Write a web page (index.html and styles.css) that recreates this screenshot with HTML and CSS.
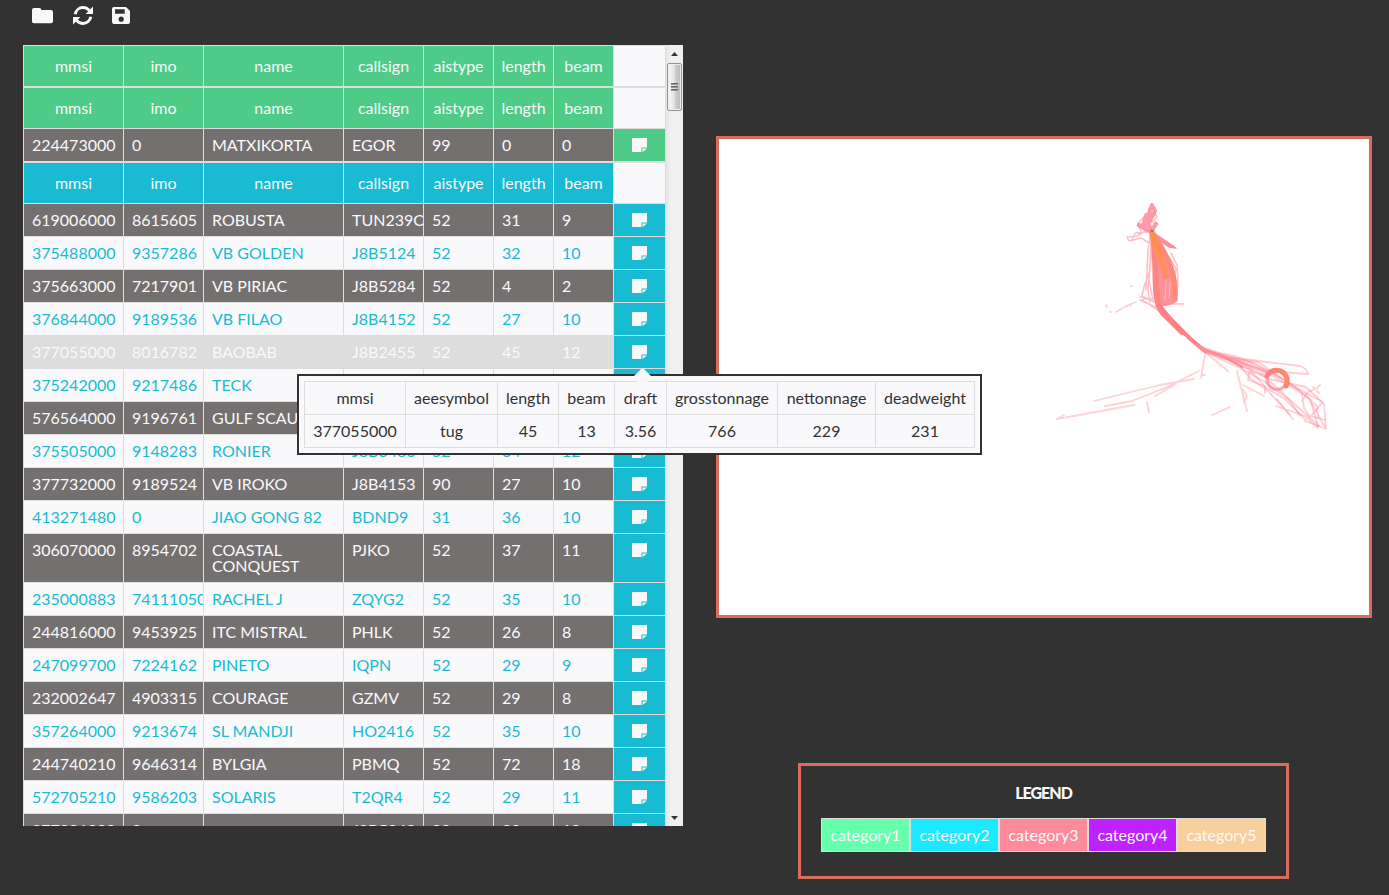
FILE: index.html
```html
<!DOCTYPE html>
<html lang="en">
<head>
<meta charset="utf-8">
<title>Vessels</title>
<link rel="stylesheet" href="styles.css">
</head>
<body>
<svg class="defs" aria-hidden="true">
  <symbol id="note" viewBox="0 0 16 15"><path d="M0 0H15V9.5H9.5V14H0Z" fill="#f9f9fc"/><path d="M10.500 14V10.500H15Z" fill="#f9f9fc"/></symbol>
</svg>
<main class="page">
  <section class="left">
    <nav class="toolbar">
      <svg class="tool folder" viewBox="0 0 21 16"><path d="M0 2Q0 0 2 0H7.5Q9.3 0 9.3 2H19Q21 2 21 4V13.5Q21 15.3 19 15.3H2Q0 15.3 0 13.5Z" fill="#f9f9fc"/></svg>
      <svg class="tool refresh" viewBox="0 0 20 19"><path d="M2.2 8.2C3 4 6.4 1.6 10 1.6C12.6 1.6 14.7 2.7 16.4 4.5M17.8 10.8C17 15 13.6 17.4 10 17.4C7.400 17.400 5.300 16.300 3.600 14.500" fill="none" stroke="#f9f9fc" stroke-width="3"/><path d="M20 .6V8H12.600ZM0 18.400V11H7.400Z" fill="#f9f9fc"/></svg>
      <svg class="tool save" viewBox="0 0 18 17"><path fill-rule="evenodd" d="M2 0H14L18 4V15Q18 17 16 17H2Q0 17 0 15V2Q0 0 2 0ZM3 2.200V6.800H12.700V2.200ZM9.200 9.600A2.600 2.600 0 1 0 9.200 14.800A2.600 2.600 0 1 0 9.200 9.600Z" fill="#f9f9fc"/></svg>
    </nav>
    <div class="panel">
      <div class="tables">
        <div class="grid green">
          <div class="row head"><b>mmsi</b><b>imo</b><b>name</b><b>callsign</b><b>aistype</b><b>length</b><b>beam</b><b></b></div>
        </div>
        <div class="grid green">
          <div class="row head"><b>mmsi</b><b>imo</b><b>name</b><b>callsign</b><b>aistype</b><b>length</b><b>beam</b><b></b></div>
          <div class="row dark"><span>224473000</span><span>0</span><span>MATXIKORTA</span><span>EGOR</span><span>99</span><span>0</span><span>0</span><i><svg><use href="#note"/></svg></i></div>
        </div>
        <div class="grid cyan">
          <div class="row head"><b>mmsi</b><b>imo</b><b>name</b><b>callsign</b><b>aistype</b><b>length</b><b>beam</b><b></b></div>
          <div class="row dark"><span>619006000</span><span>8615605</span><span>ROBUSTA</span><span>TUN239O</span><span>52</span><span>31</span><span>9</span><i><svg><use href="#note"/></svg></i></div>
          <div class="row"><span>375488000</span><span>9357286</span><span>VB GOLDEN</span><span>J8B5124</span><span>52</span><span>32</span><span>10</span><i><svg><use href="#note"/></svg></i></div>
          <div class="row dark"><span>375663000</span><span>7217901</span><span>VB PIRIAC</span><span>J8B5284</span><span>52</span><span>4</span><span>2</span><i><svg><use href="#note"/></svg></i></div>
          <div class="row"><span>376844000</span><span>9189536</span><span>VB FILAO</span><span>J8B4152</span><span>52</span><span>27</span><span>10</span><i><svg><use href="#note"/></svg></i></div>
          <div class="row hover"><span>377055000</span><span>8016782</span><span>BAOBAB</span><span>J8B2455</span><span>52</span><span>45</span><span>12</span><i><svg><use href="#note"/></svg></i></div>
          <div class="row"><span>375242000</span><span>9217486</span><span>TECK</span><span></span><span></span><span></span><span></span><i><svg><use href="#note"/></svg></i></div>
          <div class="row dark"><span>576564000</span><span>9196761</span><span>GULF SCAU</span><span></span><span></span><span></span><span></span><i><svg><use href="#note"/></svg></i></div>
          <div class="row"><span>375505000</span><span>9148283</span><span>RONIER</span><span>J8B3480</span><span>52</span><span>34</span><span>12</span><i><svg><use href="#note"/></svg></i></div>
          <div class="row dark"><span>377732000</span><span>9189524</span><span>VB IROKO</span><span>J8B4153</span><span>90</span><span>27</span><span>10</span><i><svg><use href="#note"/></svg></i></div>
          <div class="row"><span>413271480</span><span>0</span><span>JIAO GONG 82</span><span>BDND9</span><span>31</span><span>36</span><span>10</span><i><svg><use href="#note"/></svg></i></div>
          <div class="row dark"><span>306070000</span><span>8954702</span><span>COASTAL CONQUEST</span><span>PJKO</span><span>52</span><span>37</span><span>11</span><i><svg><use href="#note"/></svg></i></div>
          <div class="row"><span>235000883</span><span>741110500</span><span>RACHEL J</span><span>ZQYG2</span><span>52</span><span>35</span><span>10</span><i><svg><use href="#note"/></svg></i></div>
          <div class="row dark"><span>244816000</span><span>9453925</span><span>ITC MISTRAL</span><span>PHLK</span><span>52</span><span>26</span><span>8</span><i><svg><use href="#note"/></svg></i></div>
          <div class="row"><span>247099700</span><span>7224162</span><span>PINETO</span><span>IQPN</span><span>52</span><span>29</span><span>9</span><i><svg><use href="#note"/></svg></i></div>
          <div class="row dark"><span>232002647</span><span>4903315</span><span>COURAGE</span><span>GZMV</span><span>52</span><span>29</span><span>8</span><i><svg><use href="#note"/></svg></i></div>
          <div class="row"><span>357264000</span><span>9213674</span><span>SL MANDJI</span><span>HO2416</span><span>52</span><span>35</span><span>10</span><i><svg><use href="#note"/></svg></i></div>
          <div class="row dark"><span>244740210</span><span>9646314</span><span>BYLGIA</span><span>PBMQ</span><span>52</span><span>72</span><span>18</span><i><svg><use href="#note"/></svg></i></div>
          <div class="row"><span>572705210</span><span>9586203</span><span>SOLARIS</span><span>T2QR4</span><span>52</span><span>29</span><span>11</span><i><svg><use href="#note"/></svg></i></div>
          <div class="row dark"><span>377291000</span><span>0</span><span></span><span>J8B5242</span><span>90</span><span>30</span><span>10</span><i><svg><use href="#note"/></svg></i></div>
        </div>
      </div>
      <div class="scrollbar">
        <svg class="arrow" viewBox="0 0 17 18"><path d="M5 11H12L8.500 7Z" fill="#333"/></svg>
        <div class="thumb"><u></u><u></u><u></u></div>
        <svg class="arrow down" viewBox="0 0 17 18"><path d="M5 8H12L8.500 12Z" fill="#333"/></svg>
      </div>
    </div>
    <div class="tooltip">
      <table class="details">
        <colgroup><col class="w101"><col class="w92"><col class="w61"><col class="w56"><col class="w52"><col class="w111"><col class="w98"><col class="w99"></colgroup>
        <tr><td>mmsi</td><td>aeesymbol</td><td>length</td><td>beam</td><td>draft</td><td>grosstonnage</td><td>nettonnage</td><td>deadweight</td></tr>
        <tr><td>377055000</td><td>tug</td><td>45</td><td>13</td><td>3.56</td><td>766</td><td>229</td><td>231</td></tr>
      </table>
      <svg class="tip" viewBox="0 0 20 18"><path d="M0 9L8 1.200Q10 -.4 12 1.200L20 9L11 18H9Z" fill="#f9f9fc"/></svg>
    </div>
  </section>
  <section class="right">
    <div class="map">
      <svg viewBox="719 139 650 476" fill="none" stroke="#ff8a99" stroke-linecap="round" stroke-linejoin="round">
        <!-- northern traces -->
        <g stroke-width="3" opacity=".85">
          <path d="M1152 205L1147 218L1144 228M1153 207L1155 211L1150 221M1146 215L1143 226L1151 230M1150 209L1148 222" stroke-width="4"/>
          <path d="M1139 225L1146 229L1151 231L1156 224M1151 214L1147 226L1140 226M1148 222L1150 229" stroke-width="4.500"/>
        </g>
        <g stroke-width="1.500" opacity=".55">
          <path d="M1143 218L1138 223L1141 231M1154 212L1157 217L1152 223M1147 230L1137 236L1127 237L1129 241L1141 238L1149 243M1149 232L1135 233L1132 240"/>
          <path d="M1150 236L1148 250L1147 270L1146 290M1151 240L1150 265L1148 290L1150 302M1153 242L1150 270L1145 285M1151 250L1149 280L1153 301"/>
          <path d="M1145 283L1142 296L1154 302M1140 297L1160 300L1172 304L1184 304M1140 300L1160 309M1146 302L1164 315M1142 300L1148 298"/>
          <path d="M1171 253L1177 265L1178 278L1177 294M1169 257L1176 269L1174 280L1178 288"/>
        </g>
        <path d="M1151 231L1176 248L1169 247L1159 240Z" fill="#ff8a99" stroke-width="1.500"/>
        <path d="M1151 231C1156 255 1152 292 1158 304C1162 308 1173 304 1177 301C1179 275 1171 256 1151 231Z" fill="#ff909b" stroke-width="1"/>
        <path d="M1166 280L1165 300M1170 282L1169 298" stroke="#ffb1ba" stroke-width="1.200"/>
        <path d="M1152 232C1157 250 1154 278 1157 299Q1159 311 1168 318L1182 332" stroke="#ff8680" stroke-width="6"/>
        <path d="M1153 234C1171 260 1176 277 1174 298" stroke="#ff8a78" stroke-width="5"/>
        <path d="M1153 236C1156 250 1162 260 1166 276" stroke="#ff8e62" stroke-width="6"/>
        <path d="M1152 232C1154 241 1158 247 1161 256" stroke="#ff913f" stroke-width="3"/>
        <circle cx="1152" cy="231" r="1.200" fill="#539875" stroke="none"/>
        <path d="M1159 305Q1179 331 1205 351" stroke="#ff808b" stroke-width="4"/>
        <!-- south-western traces -->
        <g stroke-width="1.800" opacity=".38">
          <path d="M1116 312L1126 306L1136 302M1126 306L1131 305M1106 305L1107 307M1110 312H1111M1131 286H1132"/>
          <path d="M1094 401L1160 385L1194 379M1105 406L1132 401L1165 388L1199 371M1155 396L1176 384M1057 419L1134 405M1057 419L1064 415M1147 402L1149 412M1205 355L1201 378M1203 375H1205M1212 415L1230 407"/>
          <path d="M1205 352L1228 371M1237 371L1247 411M1240 386L1247 396L1244 403M1242 389L1244 402M1243 385L1264 396"/>
        </g>
        <!-- south-eastern bundle -->
        <path d="M1199 347Q1213 353 1224 357L1242 367" stroke-width="2.500"/>
        <g stroke-width="1.800">
          <path opacity=".42" d="M1195 344L1230 357L1267 362L1300 366Q1308 369 1308 374L1293 373L1271 370"/>
          <path opacity=".42" d="M1201 350L1235 356L1267 370L1291 385L1321 401M1203 351L1242 369L1263 381L1291 401L1319 426"/>
          <path opacity=".42" d="M1204 351L1254 363L1288 382L1310 399L1318 426M1208 352L1238 361L1265 377L1288 398L1300 416"/>
          <path opacity=".42" d="M1220 357L1249 369L1266 388L1285 399L1306 420M1240 366L1251 379L1268 391L1289 414"/>
          <path opacity=".42" d="M1211 353L1236 359L1258 362L1294 386L1317 406L1318 418M1224 357L1261 369L1308 397L1325 427"/>
          <path opacity=".42" d="M1230 360L1269 379L1306 387L1324 404L1326 429L1305 421M1250 368L1248 380L1264 386M1265 386V393M1264 374L1249 372"/>
          <path opacity=".42" d="M1302 401L1308 392L1317 388L1320 385M1313 387L1319 393M1277 399L1293 419M1276 406L1305 416L1318 428M1302 393L1304 408L1310 417M1322 403L1311 416L1325 420"/>
        </g>
        <path d="M1205 352L1237 361L1269 373" stroke-width="3" opacity=".6"/>
        <circle cx="1277" cy="379.500" r="10" stroke-width="3" opacity=".75"/>
        <path d="M1267 376A10.500 10.500 0 1 1 1286 386" stroke="#ff7e82" stroke-width="5"/>
        <path d="M1274 371Q1289 369 1287 384" stroke="#ff8c55" stroke-width="2.500"/>
      </svg>
    </div>
    <div class="legend">
      <h2 class="legend-title">LEGEND</h2>
      <div class="categories"><span class="cat c1">category1</span><span class="cat c2">category2</span><span class="cat c3">category3</span><span class="cat c4">category4</span><span class="cat c5">category5</span></div>
    </div>
  </section>
</main>
</body>
</html>
```
FILE: styles.css
```css
* { box-sizing: border-box; }
body { margin: 0; background: #323232; color: #f9f9fc; font: 16px/16px Lato, sans-serif; }
.defs { display: none; }
.page { display: flex; height: 895px; overflow: hidden; padding-left: 23px; }
.left { position: relative; width: 660px; }
.toolbar { display: flex; align-items: center; height: 45px; padding: 0 0 14px 9px; }
.tool { display: block; }
.folder { width: 21px; height: 16px; margin-right: 20px; }
.refresh { width: 20px; height: 19px; margin-right: 19px; }
.save { width: 18px; height: 17px; }
.panel { display: flex; height: 781px; background: #f9f9fc; overflow: hidden; }
.tables { width: 643px; flex: none; }
.grid { border: solid #ddd; border-width: 0 1px 1px 0; }
.row { display: grid; grid-template-columns: 100px 80px 140px 80px 70px 60px 60px 52px; color: #18bbd1; }
.row > * { border: solid #ddd; border-width: 1px 0 0 1px; padding: 8px; overflow: hidden; }
.row b { height: 41px; padding: 12px 0; text-align: center; font-weight: 400; color: #f9f9fc; }
.row i { display: flex; justify-content: center; padding: 9px 0 0; }
.row i svg { width: 16px; height: 15px; }
.green b, .green i { background: #4ecc87; }
.cyan b, .cyan i { background: #18bbd1; }
.row b:last-child { background: #f9f9fc; }
.dark span { background: #757070; color: #f9f9fc; }
.hover span { background: #ddd; color: #f9f9fc; }
.scrollbar { display: flex; flex-direction: column; width: 17px; background: linear-gradient(90deg, #e6e6e6, #f1f1f1 30%, #eee); }
.arrow { display: block; width: 17px; height: 18px; }
.arrow.down { margin-top: auto; }
.thumb { display: flex; flex-direction: column; align-items: center; justify-content: center; gap: 1px; width: 15px; height: 48px; margin-left: 1px; border: 1px solid #929292; border-radius: 2px; background: linear-gradient(90deg, #f5f5f5, #e6e6e6 45%, #cbcbcd 60%, #bfbfc3 90%, #ddd); box-shadow: inset 0 0 0 1px #eee; }
.thumb u { width: 7px; height: 2px; background: linear-gradient(#555, #aaa); }
.tooltip { position: absolute; left: 274px; top: 374px; width: 685px; height: 81px; padding: 5px; border: 2px solid #323232; background: #f9f9fc; color: #323232; }
.details { width: 671px; table-layout: fixed; border-collapse: collapse; text-align: center; }
.details td { height: 33px; padding: 0; border: 1px solid #ddd; }
.w101 { width: 101px; }
.w92 { width: 92px; }
.w61 { width: 61px; }
.w56 { width: 56px; }
.w52 { width: 52px; }
.w111 { width: 111px; }
.w98 { width: 98px; }
.w99 { width: 99px; }
.tip { position: absolute; left: 334px; top: -8px; width: 19px; height: 18px; }
.right { display: flex; flex-direction: column; align-items: center; width: 656px; margin-left: 33px; padding-top: 136px; }
.map { width: 656px; height: 482px; border: 3px solid #d66d5e; background: #fff; }
.map svg { display: block; width: 650px; height: 476px; }
.legend { width: 491px; height: 116px; margin: 145px 1px 0 0; padding: 19px 20px 20px; border: 3px solid #d66d5e; }
.legend-title { margin: 0 0 17px; font-size: 16px; font-weight: 900; line-height: 16px; letter-spacing: -1px; text-align: center; }
.categories { display: flex; }
.cat { width: 89px; height: 34px; padding: 8px 0; border: 1px solid #ddd; text-align: center; }
.c1 { background: #66ffac; }
.c2 { background: #1ce8ff; }
.c3 { background: #ff8a99; }
.c4 { background: #bd22ff; }
.c5 { background: #facf9e; }
```
